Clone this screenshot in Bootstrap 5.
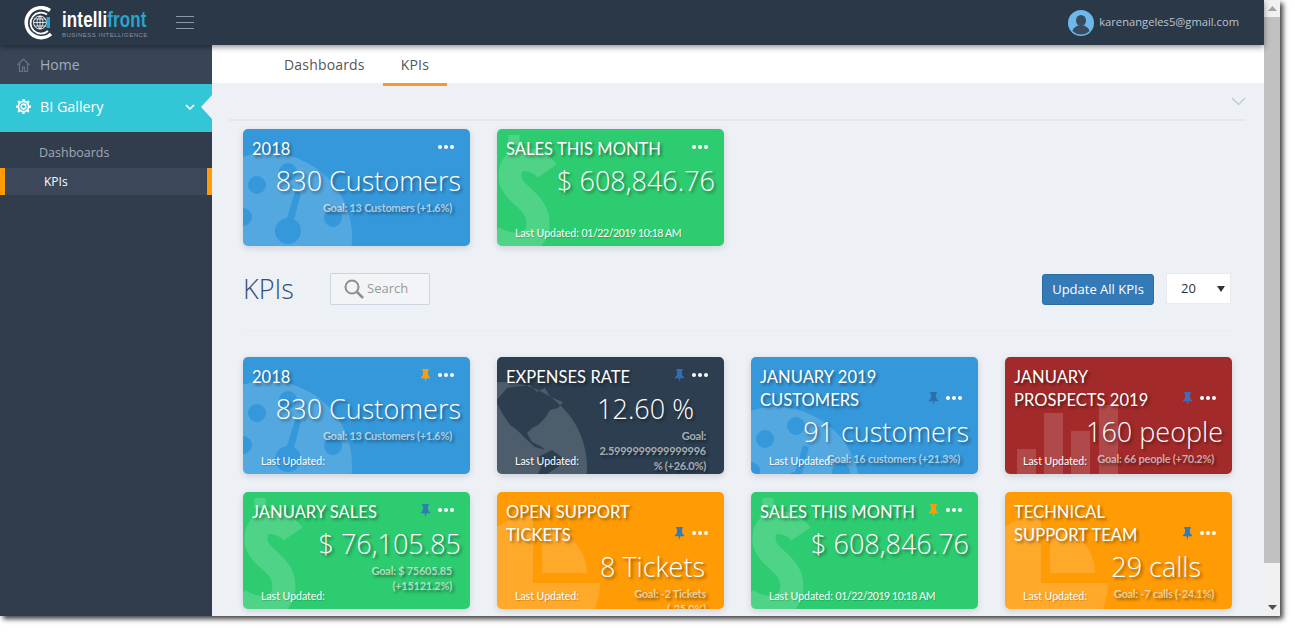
<!DOCTYPE html>
<html lang="en"><head><meta charset="utf-8"><title>KPIs</title>
<link href="https://cdn.jsdelivr.net/npm/bootstrap@5.3.0/dist/css/bootstrap.min.css" rel="stylesheet">
<style>
html,body{height:100%;overflow:hidden;background:#fff}
body{font-family:"Open Sans","Liberation Sans",sans-serif;color:#444}
.app-frame{width:1280px;height:616px;box-shadow:3px 3px 5px rgba(0,0,0,.75);overflow:hidden}
.app-left{width:1264px;flex:none}
.app-top{height:45px;background:#2b3847;box-shadow:0 2px 6px rgba(0,0,0,.45);z-index:2;padding:0 25px 0 24px;flex:none}
.app-bottom{height:571px;flex:none}
.logo-words{width:86px;margin-left:4px;line-height:1}
.logo-main{font:700 22px/25px "Liberation Sans",sans-serif;color:#fff;transform:scaleX(.77);transform-origin:0 50%;white-space:nowrap;width:86px;letter-spacing:.2px}
.logo-main span{color:#2aa5c9}
.logo-sub{font:400 6px/7px "Liberation Sans",sans-serif;color:#8795a4;letter-spacing:.5px;white-space:nowrap}
.burger{width:18px;margin-left:28px;gap:5px}
.burger i{display:block;height:1px;background:#8d98a5}
.user-mail{font-size:11.2px;color:#b9c5cf;margin-left:5px}
.side{width:212px;background:#313d4c;flex:none}
.side-home{height:39px;background:#394557;color:#a3adbb;font-size:14px;padding-left:17px;gap:10px}
.side-bi{height:48px;background:#33c6d6;color:#fff;font-size:14.3px;padding:0 17px 3px 16px;gap:9px;position:relative}
.side-bi:after{content:"";position:absolute;right:0;top:11px;border-style:solid;border-width:12px 11px 12px 0;border-color:transparent #edf0f5 transparent transparent}
.side-sub{font-size:12.5px;color:#a0aab8;padding:12px 0 7px 39px;line-height:17px}
.side-act{height:27px;background:#3c4859;border-left:5px solid #ff9b05;border-right:5px solid #ff9b05;color:#fff;font-size:12px;padding-left:39px}
.main-pane{background:#edf0f5;min-width:0}
.tabs-bar{height:38px;background:#fff;padding-left:54px;border:0}
.tabs-bar .nav-link{height:41px;padding:11px 18px 0;font-size:14px;color:#555;border:0;border-radius:0;line-height:18px;letter-spacing:.18px}
.tabs-bar .nav-link.active{color:#555;background:transparent;border-bottom:3px solid #f29a2e}
.strip{height:38px;margin:0 18px 0 17px;border-bottom:2px solid #e3e6ea}
.tile-row{padding-left:31px;gap:18px 27px}
.tile-top{margin-top:8px}
.tile{width:227px;height:117px;border:0;border-radius:5px;overflow:hidden;color:#fff;box-shadow:0 2px 6px rgba(60,70,90,.18);text-shadow:2px 2px 3px rgba(0,0,0,.45);position:relative}
.tile-blue{background:#3498db}.tile-green{background:#2ecc71}.tile-navy{background:#2c3e50}.tile-red{background:#a32a2a}.tile-orange{background:#ff9b05}
.tile-art{position:absolute;left:0;top:0;width:227px;height:117px}
.tile-head{position:relative;padding:9px 16px 0 9px}
.tile-title{font:400 16.5px/23px Lato,"Open Sans",sans-serif;letter-spacing:.05px;flex:1 1 auto;white-space:nowrap}
.tile-ctl{gap:7px;margin-bottom:7px;height:14px}
.tile-val{position:relative;text-align:right;padding-right:9px;font-weight:300;font-size:27px;line-height:36px;margin-top:2px;white-space:nowrap}
.tile-val.val-a{padding-right:30px}.tile-val.val-b{padding-right:19px}.tile-val.val-c{padding-right:31px}
.tile-goal{position:relative;text-align:right;padding-right:18px;font:700 11px/15px Lato,"Open Sans",sans-serif;color:rgba(255,255,255,.6);margin-top:1px;letter-spacing:-.25px}
.tile-upd{position:absolute;left:18px;top:97px;font:400 10.5px/14px Lato,"Open Sans",sans-serif;white-space:nowrap;text-shadow:1px 1px 1px rgba(0,0,0,.2)}
.upd-date{letter-spacing:-.4px}
.tool-row{margin:27px 33px 0 31px;height:32px}
.kpi-head{font-size:27px;font-weight:300;color:#34507a;line-height:32px;width:87px;margin:0}
.searcher{width:100px;height:32px;border:1px solid #cdd5e0;background:#f2f4f8;border-radius:2px;padding-left:13px;gap:3px;color:#999;font-size:13px}
.btn-upd{background:#337ab7;border-color:#2e6da4;font-size:13px;padding:0;width:112px;height:31px;line-height:29px;border-radius:3px;color:#fff}
.pick{width:65px;height:31px;margin:0 0 1px 12px;padding:0 0 0 14px;font-size:13px;border:1px solid #e8eaee;border-radius:0;color:#333;background:#fff url("data:image/svg+xml,%3Csvg xmlns='http://www.w3.org/2000/svg' width='8' height='6'%3E%3Cpath d='M0 0h8L4 6z' fill='%23333'/%3E%3C/svg%3E") no-repeat right 5px center}
.tool-line{margin:25px 32px 26px 31px;height:1px;background:#e9ecf1}
.rail{width:16px;flex:none;background:#f1f1f1}
.rail-btn{height:17px;flex:none}
.rail-thumb{height:546px;background:#c1c1c1;flex:none}
</style></head>
<body>
<svg width="0" height="0" class="d-block" aria-hidden="true"><defs>
<symbol id="dial" viewBox="0 0 227 117"><path fill="#fff" fill-opacity=".16" fill-rule="evenodd" d="M-59 108a84 84 0 1 0 168 0a84 84 0 1 0-168 0zM5 56a9 9 0 1 0 18 0a9 9 0 1 0-18 0zM36 43a9 9 0 1 0 18 0a9 9 0 1 0-18 0zM81 89a9 9 0 1 0 18 0a9 9 0 1 0-18 0zM-9 88a9 9 0 1 0 18 0a9 9 0 1 0-18 0zM32 102a13 13 0 1 0 26 0a13 13 0 0 0-7-11.500L58 64l-6-1.500L44 89A13 13 0 0 0 32 102z"/></symbol>
<symbol id="dollar" viewBox="0 0 227 117"><g fill="none" stroke="#fff" stroke-opacity=".16"><path stroke-width="23" d="M50 42C42 30 14 22 13 46C12 66 41 70 41 94C41 118 16 120-4 108"/><path stroke-width="11" d="M17 6V16"/></g></symbol>
<symbol id="pie" viewBox="0 0 227 117"><path fill="#fff" fill-opacity=".15" d="M45 36A45 45 0 0 1 90 81H45zM36 46V91H103A67 67 0 1 1 36 24z"/></symbol>
<symbol id="globe" viewBox="0 0 227 117"><path fill="#fff" fill-opacity=".16" fill-rule="evenodd" d="M-80 110a85 85 0 1 0 170 0a85 85 0 1 0-170 0zM-1 44L10 31L33 28L40 35L48 31L53 40L66 45L61 51L53 53L48 61L41 68L35 71L30 76L35 85L45 90L48 93L38 90L28 81L20 73L13 68L5 56zM41 100L55 93L66 101L61 110L50 117L41 117L45 108z"/></symbol>
<symbol id="bars" viewBox="0 0 227 117"><path fill="#fff" fill-opacity=".15" d="M12 92h19v25H12zM39 56h19v61H39zM66 74h19v43H66zM94 48h19v69H94z"/></symbol>
<symbol id="tack" viewBox="0 0 12 14"><path d="M2.500 0h7v1.500L8.500 2.500 9 7l2 2v1H7L6 14 5 10H1V9l2-2 .500-4.500-1-1z"/></symbol>
<symbol id="more" viewBox="0 0 16 4"><circle cx="2" cy="2" r="2"/><circle cx="8" cy="2" r="2"/><circle cx="14" cy="2" r="2"/></symbol>
</defs></svg>
<div class="app-frame d-flex">
<div class="app-left d-flex flex-column">
 <header class="app-top navbar flex-nowrap position-relative">
  <div class="d-flex align-items-center">
   <svg width="34" height="34" viewBox="0 0 34 34"><g fill="none" stroke="#fff"><path stroke-width="3.500" d="M26 4.500A15 15 0 1 0 27 28"/><path stroke-width="1.800" d="M23 8.500A10.500 10.500 0 1 0 24 25"/><circle cx="16" cy="16.500" r="6.500" stroke-width="1"/><path stroke-width=".8" d="M9.500 16.500h13M16 10v13M11 13h10M11 20h10M16 10c-4 4-4 9 0 13M16 10c4 4 4 9 0 13"/></g><path d="M22.500 11h3.500v11h-3.500z" fill="#2aa5c9"/></svg>
   <div class="logo-words"><div class="logo-main">intelli<span>front</span></div><div class="logo-sub">BUSINESS INTELLIGENCE</div></div>
   <div class="burger d-flex flex-column"><i></i><i></i><i></i></div>
  </div>
  <div class="d-flex align-items-center">
   <svg width="26" height="26" viewBox="0 0 26 26"><circle cx="13" cy="13" r="13" fill="#6db9ee"/><ellipse cx="13" cy="10.500" rx="5" ry="5.500" fill="#3a4a5f"/><path d="M4.500 21c1-4 4-4.500 5.500-5.500h6c1.500 1 4.500 1.500 5.500 5.500a12 12 0 0 1-17 0z" fill="#3a4a5f"/></svg>
   <span class="user-mail">karenangeles5@gmail.com</span>
  </div>
 </header>
 <div class="app-bottom d-flex">
  <aside class="side">
   <div class="side-home d-flex align-items-center"><svg width="13" height="14" viewBox="0 0 13 14" fill="none" stroke="#66748a" stroke-width="1.200"><path d="M.5 7 6.500 1l6 6M2.500 5.500V13.500h3V9h2v4.500h3V5.500"/></svg><span>Home</span></div>
   <div class="side-bi d-flex align-items-center"><svg width="15" height="15" viewBox="0 0 16 16" fill="none" stroke="#fff" stroke-width="1.700"><circle cx="8" cy="8" r="2.500"/><circle cx="8" cy="8" r="5.500"/><path stroke-width="2.400" d="M8 0v2.500M8 13.500V16M0 8h2.500M13.500 8H16M2.300 2.300l1.800 1.800M11.900 11.900l1.800 1.800M2.300 13.700l1.800-1.800M11.900 4.100l1.800-1.800"/></svg><span class="flex-grow-1">BI Gallery</span><svg width="10" height="6" viewBox="0 0 10 6" fill="none" stroke="#fff" stroke-width="1.600"><path d="M1 1l4 4 4-4"/></svg></div>
   <div class="side-sub">Dashboards</div>
   <div class="side-act d-flex align-items-center">KPIs</div>
  </aside>
  <main class="main-pane flex-grow-1">
   <ul class="nav tabs-bar">
    <li class="nav-item"><a class="nav-link" href="#">Dashboards</a></li>
    <li class="nav-item"><a class="nav-link active" href="#">KPIs</a></li>
   </ul>
   <div class="strip d-flex align-items-center justify-content-end"><svg width="15" height="9" viewBox="0 0 15 9" fill="none" stroke="#c5cad1" stroke-width="1.500"><path d="M1 1l6.500 6.500L14 1"/></svg></div>

   <div class="tile-row tile-top d-flex">
    <div class="card tile tile-blue"><svg class="tile-art"><use href="#dial"/></svg>
     <div class="tile-head d-flex"><div class="tile-title">2018</div><div class="tile-ctl d-flex align-items-center align-self-end"><svg width="16" height="4" fill="#fff"><use href="#more"/></svg></div></div>
     <div class="tile-val">830 Customers</div><div class="tile-goal">Goal: 13 Customers (+1.6%)</div></div>
    <div class="card tile tile-green"><svg class="tile-art"><use href="#dollar"/></svg>
     <div class="tile-head d-flex"><div class="tile-title">SALES THIS MONTH</div><div class="tile-ctl d-flex align-items-center align-self-end"><svg width="16" height="4" fill="#fff"><use href="#more"/></svg></div></div>
     <div class="tile-val">$ 608,846.76</div><div class="tile-upd">Last Updated: <span class="upd-date">01/22/2019 10:18 AM</span></div></div>
   </div>

   <div class="tool-row d-flex align-items-center">
    <h2 class="kpi-head">KPIs</h2>
    <div class="searcher d-flex align-items-center"><svg width="20" height="20" viewBox="0 0 20 20" fill="none" stroke="#8f8f8f" stroke-width="2"><circle cx="8" cy="8" r="6.500"/><path stroke-width="2.500" d="M12.500 12.500 19 19"/></svg><span>Search</span></div>
    <button class="btn btn-primary btn-upd ms-auto" type="button">Update All KPIs</button>
    <select class="form-select pick" aria-label="Page size"><option>20</option></select>
   </div>
   <div class="tool-line"></div>

   <div class="tile-row d-flex flex-wrap">
    <div class="card tile tile-blue"><svg class="tile-art"><use href="#dial"/></svg>
     <div class="tile-head d-flex"><div class="tile-title">2018</div><div class="tile-ctl d-flex align-items-center align-self-end"><svg width="11" height="13" fill="#ff9b05"><use href="#tack"/></svg><svg width="16" height="4" fill="#fff"><use href="#more"/></svg></div></div>
     <div class="tile-val">830 Customers</div><div class="tile-goal">Goal: 13 Customers (+1.6%)</div><div class="tile-upd">Last Updated:</div></div>
    <div class="card tile tile-navy"><svg class="tile-art"><use href="#globe"/></svg>
     <div class="tile-head d-flex"><div class="tile-title">EXPENSES RATE</div><div class="tile-ctl d-flex align-items-center align-self-end"><svg width="11" height="13" fill="#2f6db5"><use href="#tack"/></svg><svg width="16" height="4" fill="#fff"><use href="#more"/></svg></div></div>
     <div class="tile-val val-a">12.60 %</div><div class="tile-goal">Goal:<br>2.5999999999999996<br>% (+26.0%)</div><div class="tile-upd">Last Updated:</div></div>
    <div class="card tile tile-blue"><svg class="tile-art" viewBox="0 -26 227 117"><use href="#dial" width="227" height="117"/></svg>
     <div class="tile-head d-flex"><div class="tile-title">JANUARY 2019<br>CUSTOMERS</div><div class="tile-ctl d-flex align-items-center align-self-end"><svg width="11" height="13" fill="#2e6fa8"><use href="#tack"/></svg><svg width="16" height="4" fill="#fff"><use href="#more"/></svg></div></div>
     <div class="tile-val">91 customers</div><div class="tile-goal">Goal: 16 customers (+21.3%)</div><div class="tile-upd">Last Updated:</div></div>
    <div class="card tile tile-red"><svg class="tile-art"><use href="#bars"/></svg>
     <div class="tile-head d-flex"><div class="tile-title">JANUARY<br>PROSPECTS 2019</div><div class="tile-ctl d-flex align-items-center align-self-end"><svg width="11" height="13" fill="#3a6fc0"><use href="#tack"/></svg><svg width="16" height="4" fill="#fff"><use href="#more"/></svg></div></div>
     <div class="tile-val">160 people</div><div class="tile-goal">Goal: 66 people (+70.2%)</div><div class="tile-upd">Last Updated:</div></div>
    <div class="card tile tile-green"><svg class="tile-art"><use href="#dollar"/></svg>
     <div class="tile-head d-flex"><div class="tile-title">JANUARY SALES</div><div class="tile-ctl d-flex align-items-center align-self-end"><svg width="11" height="13" fill="#2f7bbd"><use href="#tack"/></svg><svg width="16" height="4" fill="#fff"><use href="#more"/></svg></div></div>
     <div class="tile-val">$ 76,105.85</div><div class="tile-goal">Goal: $ 75605.85<br>(+15121.2%)</div><div class="tile-upd">Last Updated:</div></div>
    <div class="card tile tile-orange"><svg class="tile-art"><use href="#pie"/></svg>
     <div class="tile-head d-flex"><div class="tile-title">OPEN SUPPORT<br>TICKETS</div><div class="tile-ctl d-flex align-items-center align-self-end"><svg width="11" height="13" fill="#2f7bbd"><use href="#tack"/></svg><svg width="16" height="4" fill="#fff"><use href="#more"/></svg></div></div>
     <div class="tile-val val-b">8 Tickets</div><div class="tile-goal">Goal: -2 Tickets<br>(-25.0%)</div><div class="tile-upd">Last Updated:</div></div>
    <div class="card tile tile-green"><svg class="tile-art"><use href="#dollar"/></svg>
     <div class="tile-head d-flex"><div class="tile-title">SALES THIS MONTH</div><div class="tile-ctl d-flex align-items-center align-self-end"><svg width="11" height="13" fill="#ff9b05"><use href="#tack"/></svg><svg width="16" height="4" fill="#fff"><use href="#more"/></svg></div></div>
     <div class="tile-val">$ 608,846.76</div><div class="tile-upd">Last Updated: <span class="upd-date">01/22/2019 10:18 AM</span></div></div>
    <div class="card tile tile-orange"><svg class="tile-art"><use href="#pie"/></svg>
     <div class="tile-head d-flex"><div class="tile-title">TECHNICAL<br>SUPPORT TEAM</div><div class="tile-ctl d-flex align-items-center align-self-end"><svg width="11" height="13" fill="#2f7bbd"><use href="#tack"/></svg><svg width="16" height="4" fill="#fff"><use href="#more"/></svg></div></div>
     <div class="tile-val val-c">29 calls</div><div class="tile-goal">Goal: -7 calls (-24.1%)</div><div class="tile-upd">Last Updated:</div></div>
   </div>
  </main>
 </div>
</div>
<div class="rail d-flex flex-column">
 <div class="rail-btn d-flex align-items-center justify-content-center"><svg width="9" height="5"><path d="M0 5L4.500 0 9 5z" fill="#a3a3a3"/></svg></div>
 <div class="rail-thumb"></div>
 <div class="flex-grow-1"></div>
 <div class="rail-btn d-flex align-items-center justify-content-center"><svg width="9" height="5"><path d="M0 0L4.500 5 9 0z" fill="#505050"/></svg></div>
</div>
</div>
</body></html>
